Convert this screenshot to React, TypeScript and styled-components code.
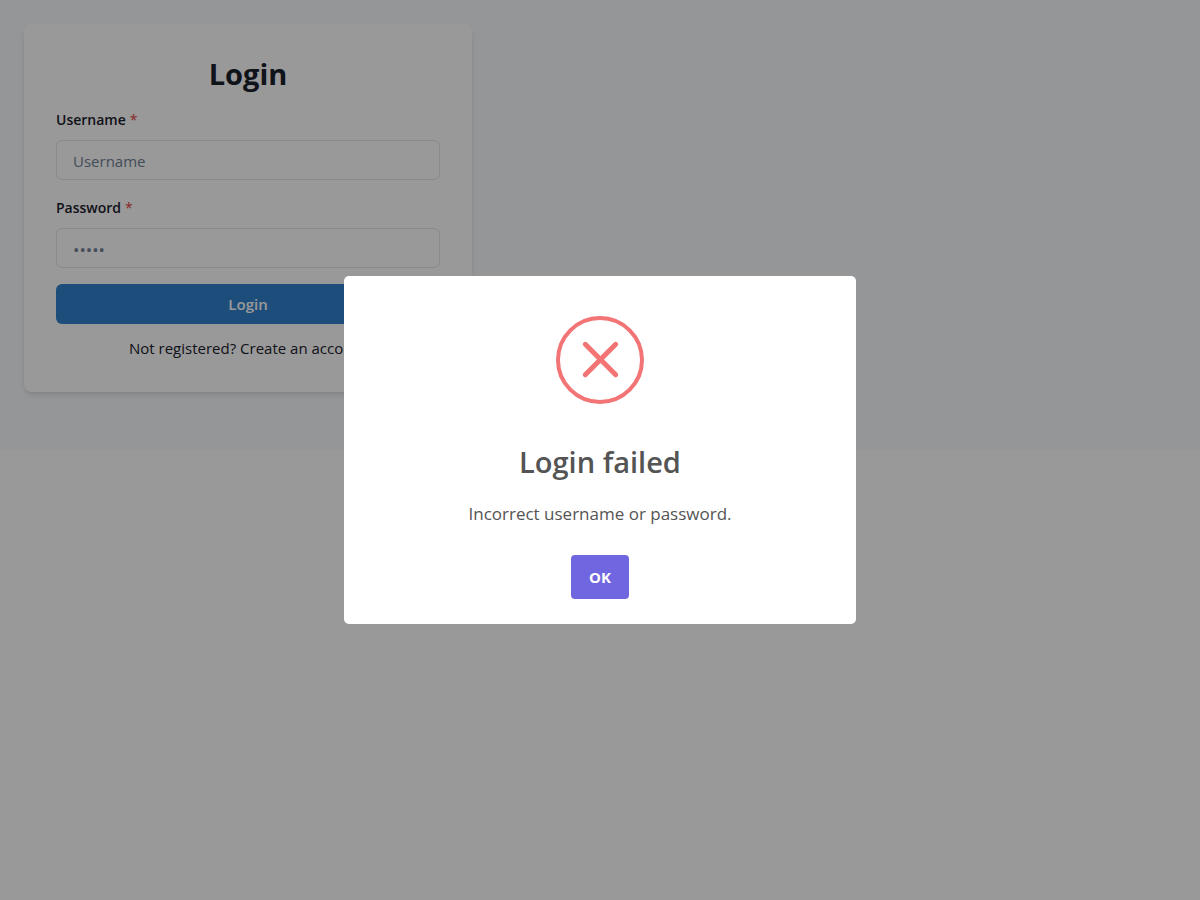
import React, { useState } from 'react';
import styled, { createGlobalStyle } from 'styled-components';

const GlobalStyle = createGlobalStyle`
  *, *::before, *::after { box-sizing: border-box; }
  body {
    margin: 0;
    background: #ffffff;
    color: #1a202c;
    font-family: 'Segoe UI', 'Open Sans', 'Noto Sans', sans-serif;
    font-size: 15px;
    line-height: 24px;
  }
  button, input { font: inherit; margin: 0; }
`;

const Page = styled.main`
  min-height: 50vh;
  padding: 24px;
  background: #f7fafc;
`;

const Card = styled.section`
  width: 100%;
  max-width: 448px;
  padding: 32px;
  border-radius: 8px;
  background: #ffffff;
  box-shadow: 0 4px 6px -1px rgba(0, 0, 0, 0.1), 0 2px 4px -1px rgba(0, 0, 0, 0.06);
`;

const Form = styled.form`
  display: flex;
  flex-direction: column;
  gap: 16px;
`;

const Heading = styled.h1`
  margin: 0;
  font-size: 29px;
  font-weight: 700;
  line-height: 36px;
  text-align: center;
`;

const Field = styled.div`
  display: flex;
  flex-direction: column;
  gap: 8px;
`;

const Label = styled.label`
  font-size: 14px;
  font-weight: 600;
`;

const Required = styled.span`
  margin-left: 4px;
  color: #e53e3e;
  font-weight: 400;
`;

const Input = styled.input`
  width: 100%;
  height: 40px;
  padding: 2px 16px 0;
  border: 1px solid #e2e8f0;
  border-radius: 6px;
  background: transparent;
  color: inherit;
  outline: none;

  &::placeholder {
    color: #718096;
    opacity: 1;
  }
  &[type='password'] {
    font-size: 17px;
  }
  &:focus {
    border-color: #3182ce;
  }
`;

const SubmitButton = styled.button`
  height: 40px;
  border: 0;
  border-radius: 6px;
  background: #3182ce;
  color: #ffffff;
  font-weight: 600;
  cursor: pointer;
`;

const RegisterLink = styled.a`
  display: block;
  margin: 12px 0 0;
  color: inherit;
  text-align: center;
  text-decoration: none;
`;

const Overlay = styled.div`
  position: fixed;
  inset: 0;
  display: grid;
  place-items: center;
  padding: 10px;
  background: rgba(0, 0, 0, 0.4);
`;

const Dialog = styled.div`
  display: flex;
  flex-direction: column;
  align-items: center;
  width: 100%;
  max-width: 512px;
  padding: 40px 24px 25px;
  border-radius: 5px;
  background: #ffffff;
  color: #545454;
  text-align: center;
`;

const DialogTitle = styled.h2`
  margin: 40px 0 0;
  font-size: 29px;
  font-weight: 600;
  line-height: 36px;
`;

const DialogText = styled.p`
  margin: 20px 0 28px;
  font-size: 17px;
  font-weight: 400;
  line-height: 27px;
`;

const ConfirmButton = styled.button`
  min-width: 58px;
  height: 44px;
  padding: 0 17px;
  border: 0;
  border-radius: 4px;
  background: #7066e0;
  color: #ffffff;
  font-weight: 700;
  cursor: pointer;
`;

function ErrorIcon() {
  return (
    <svg width="88" height="88" viewBox="0 0 88 88" fill="none" stroke="#f27474" aria-hidden="true">
      <circle cx="44" cy="44" r="42" strokeWidth="4" />
      <path d="M29.3 28.3 59.7 58.7M59.7 28.3 29.3 58.7" strokeWidth="5" strokeLinecap="round" />
    </svg>
  );
}

export default function App() {
  const [open, setOpen] = useState(true);

  return (
    <>
      <GlobalStyle />
      <Page>
        <Card>
          <Form
            onSubmit={(event) => {
              event.preventDefault();
              setOpen(true);
            }}
          >
            <Heading>Login</Heading>
            <Field>
              <Label htmlFor="username">
                Username<Required aria-hidden="true">*</Required>
              </Label>
              <Input id="username" type="text" placeholder="Username" required />
            </Field>
            <Field>
              <Label htmlFor="password">
                Password<Required aria-hidden="true">*</Required>
              </Label>
              <Input id="password" type="password" placeholder="•••••" required />
            </Field>
            <SubmitButton type="submit">Login</SubmitButton>
          </Form>
          <RegisterLink href="#register">Not registered? Create an account</RegisterLink>
        </Card>
      </Page>
      {open && (
        <Overlay>
          <Dialog role="dialog" aria-modal="true" aria-labelledby="dialog-title" aria-describedby="dialog-text">
            <ErrorIcon />
            <DialogTitle id="dialog-title">Login failed</DialogTitle>
            <DialogText id="dialog-text">Incorrect username or password.</DialogText>
            <ConfirmButton type="button" onClick={() => setOpen(false)}>
              OK
            </ConfirmButton>
          </Dialog>
        </Overlay>
      )}
    </>
  );
}
